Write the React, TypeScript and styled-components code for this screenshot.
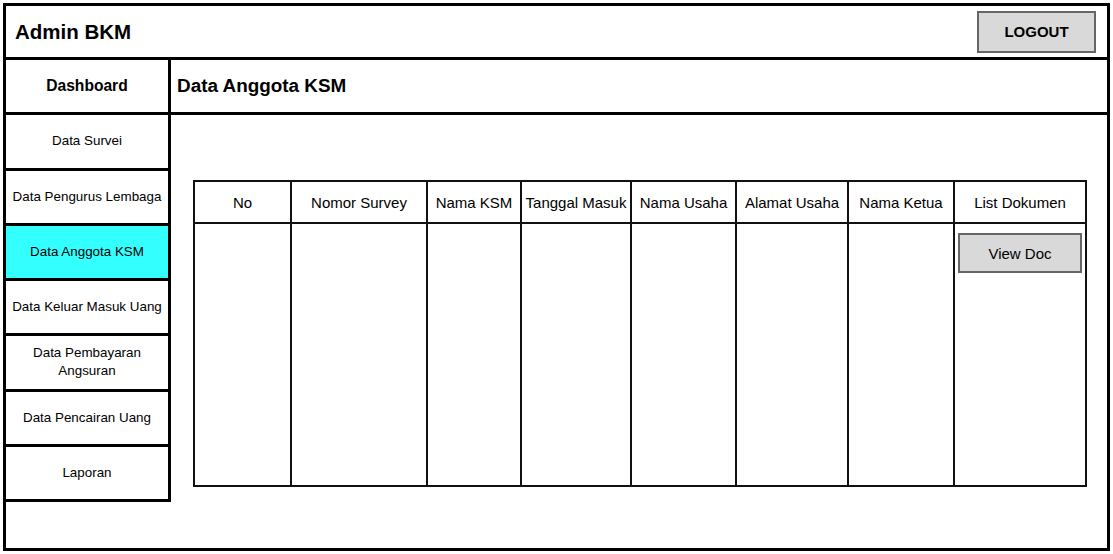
import React from 'react'
import styled, { createGlobalStyle } from 'styled-components'

const GlobalStyle = createGlobalStyle`
    html,
    body {
        margin: 0;
        padding: 0;
        background: #ffffff;
        font-family: 'Liberation Sans', Arial, sans-serif;
        color: #000000;
    }
`

const menu = [
    'Data Survei',
    'Data Pengurus Lembaga',
    'Data Anggota KSM',
    'Data Keluar Masuk Uang',
    'Data Pembayaran Angsuran',
    'Data Pencairan Uang',
    'Laporan',
]

const columns = [
    { label: 'No', width: 97 },
    { label: 'Nomor Survey', width: 136 },
    { label: 'Nama KSM', width: 94 },
    { label: 'Tanggal Masuk', width: 110 },
    { label: 'Nama Usaha', width: 105 },
    { label: 'Alamat Usaha', width: 112 },
    { label: 'Nama Ketua', width: 106 },
    { label: 'List Dokumen', width: 132 },
]

const App: React.FC = () => {
    return (
        <>
            <GlobalStyle />
            <Frame>
                <Header>
                    <Brand>Admin BKM</Brand>
                    <GreyButton $w={119} $h={42} $bold>
                        LOGOUT
                    </GreyButton>
                </Header>
                <Body>
                    <Sidebar>
                        <NavItem $head>Dashboard</NavItem>
                        {menu.map((item) => (
                            <NavItem key={item} $active={item === 'Data Anggota KSM'}>
                                {item}
                            </NavItem>
                        ))}
                    </Sidebar>
                    <Main>
                        <TitleBar>Data Anggota KSM</TitleBar>
                        <Content>
                            <Table $cols={columns.map((c) => `${c.width}px`).join(' ')}>
                                {columns.map((c) => (
                                    <HeadCell key={c.label}>{c.label}</HeadCell>
                                ))}
                                {columns.map((c, i) => (
                                    <BodyCell key={c.label}>
                                        {i === columns.length - 1 && (
                                            <GreyButton $w={124} $h={40}>
                                                View Doc
                                            </GreyButton>
                                        )}
                                    </BodyCell>
                                ))}
                            </Table>
                        </Content>
                    </Main>
                </Body>
            </Frame>
        </>
    )
}

export default App

const Frame = styled.div`
    margin: 3px;
    width: 1107px;
    height: 548px;
    box-sizing: border-box;
    border: 3px solid #000;
    display: flex;
    flex-direction: column;
`

const Header = styled.header`
    height: 54px;
    flex-shrink: 0;
    box-sizing: border-box;
    border-bottom: 3px solid #000;
    display: flex;
    align-items: center;
    justify-content: space-between;
    padding: 0 11px 0 9px;
`

const Brand = styled.span`
    font-size: 20.5px;
    font-weight: bold;
`

const GreyButton = styled.button<{ $w: number; $h: number; $bold?: boolean }>`
    width: ${(p) => p.$w}px;
    height: ${(p) => p.$h}px;
    box-sizing: border-box;
    border: 2px solid #666;
    border-radius: 0;
    background: #d9d9d9;
    color: #000;
    font-family: 'Liberation Sans', Arial, sans-serif;
    font-size: 15px;
    font-weight: ${(p) => (p.$bold ? 'bold' : 'normal')};
    padding: 0;
    cursor: pointer;
`

const Body = styled.div`
    flex: 1;
    display: flex;
`

const Sidebar = styled.nav`
    width: 165px;
    flex-shrink: 0;
    display: flex;
    flex-direction: column;
`

const NavItem = styled.div<{ $active?: boolean; $head?: boolean }>`
    height: 55.25px;
    box-sizing: border-box;
    border-right: 3px solid #000;
    border-bottom: 3px solid #000;
    display: flex;
    align-items: center;
    justify-content: center;
    text-align: center;
    padding: 0 2px;
    line-height: 18px;
    background: ${(p) => (p.$active ? '#33ffff' : '#fff')};
    font-size: ${(p) => (p.$head ? '15.6px' : '13.4px')};
    font-weight: ${(p) => (p.$head ? 'bold' : 'normal')};
`

const Main = styled.main`
    flex: 1;
    display: flex;
    flex-direction: column;
`

const TitleBar = styled.div`
    height: 55.25px;
    box-sizing: border-box;
    border-bottom: 3px solid #000;
    display: flex;
    align-items: center;
    padding-left: 6px;
    font-size: 18.9px;
    font-weight: bold;
`

const Content = styled.div`
    padding: 65px 0 0 22px;
`

const Table = styled.div<{ $cols: string }>`
    display: grid;
    grid-template-columns: ${(p) => p.$cols};
    grid-template-rows: 42px 263px;
    width: max-content;
    border-top: 2px solid #111;
    border-left: 2px solid #111;
`

const HeadCell = styled.div`
    box-sizing: border-box;
    border-right: 2px solid #111;
    border-bottom: 2px solid #111;
    display: flex;
    align-items: center;
    justify-content: center;
    font-size: 15px;
    white-space: nowrap;
`

const BodyCell = styled.div`
    box-sizing: border-box;
    border-right: 2px solid #111;
    border-bottom: 2px solid #111;
    display: flex;
    justify-content: center;
    align-items: flex-start;
    padding-top: 9px;
`
